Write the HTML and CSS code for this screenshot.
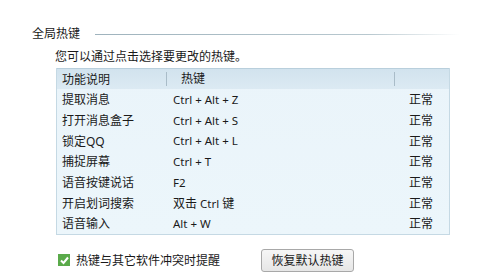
FILE: index.html
```html
<!DOCTYPE html>
<html lang="zh-CN">
  <head>
    <meta charset="UTF-8" />
    <title>全局热键</title>
    <link rel="stylesheet" href="styles.css">
  </head>
  <body>
    <div class="panel">
      <div class="group-title">
        <span>全局热键</span>
        <div class="rule"></div>
      </div>
      <p class="hint">您可以通过点击选择要更改的热键。</p>

      <div class="hotkeys">
        <div class="row head">
          <div class="cell">功能说明</div>
          <div class="cell">热键</div>
          <div class="cell"></div>
        </div>
        <div class="row"><div class="cell">提取消息</div><div class="cell key">Ctrl + Alt + Z</div><div class="cell state">正常</div></div>
        <div class="row"><div class="cell">打开消息盒子</div><div class="cell key">Ctrl + Alt + S</div><div class="cell state">正常</div></div>
        <div class="row"><div class="cell">锁定QQ</div><div class="cell key">Ctrl + Alt + L</div><div class="cell state">正常</div></div>
        <div class="row"><div class="cell">捕捉屏幕</div><div class="cell key">Ctrl + T</div><div class="cell state">正常</div></div>
        <div class="row"><div class="cell">语音按键说话</div><div class="cell key">F2</div><div class="cell state">正常</div></div>
        <div class="row"><div class="cell">开启划词搜索</div><div class="cell key"><span class="zh">双击</span> Ctrl <span class="zh">键</span></div><div class="cell state">正常</div></div>
        <div class="row"><div class="cell">语音输入</div><div class="cell key">Alt + W</div><div class="cell state">正常</div></div>
      </div>

      <div class="footer">
        <label class="check">
          <span class="box">
            <svg width="11" height="11" viewBox="0 0 11 11"><path d="M2 5.5 L4.5 8 L9 2.5" fill="none" stroke="#fff" stroke-width="2"/></svg>
          </span>
          热键与其它软件冲突时提醒
        </label>
        <button class="reset-btn">恢复默认热键</button>
      </div>
    </div>
  </body>
</html>
```

FILE: styles.css
```css
body {
  margin: 0;
  background: #fff;
  font-family: "Noto Sans", "Noto Sans CJK SC", sans-serif;
  font-size: 12px;
  color: #1a1a1a;
}

.panel {
  padding: 26px 0 0 32px;
}

.group-title {
  display: flex;
  align-items: center;
  height: 16px;
}

.group-title span {
  line-height: 16px;
}

.rule {
  flex: 0 0 365px;
  height: 1px;
  margin-left: 15px;
  background: linear-gradient(90deg, #9fb3bd 0%, #b8c8cf 75%, rgba(220, 230, 235, 0) 100%);
}

.hint {
  margin: 7px 0 0 23px;
  line-height: 16px;
}

.hotkeys {
  margin: 3px 0 0 24px;
  width: 392px;
  border: 1px solid #c5d9e4;
  border-top: none;
  background: linear-gradient(180deg, #eaf4fa 0%, #ecf6fb 100%);
}

.row {
  display: grid;
  grid-template-columns: 109px 228px 55px;
  height: 20.7px;
  align-items: center;
}

.row.head {
  height: 20px;
  background: linear-gradient(180deg, #d2e3ee 0%, #dceaf3 100%);
  border-top: 1px solid #b9cfdc;
}

.cell {
  padding-left: 5px;
  white-space: nowrap;
}

.head .cell + .cell {
  border-left: 1px solid #a9bcc8;
  padding-left: 14px;
  height: 14px;
  line-height: 14px;
}

.key {
  padding-left: 7px;
  font-size: 11.5px;
}

.key .zh {
  font-size: 12px;
}

.state {
  text-align: right;
  padding-right: 16px;
}

.footer {
  display: flex;
  align-items: center;
  margin: 14px 0 0 26px;
}

.check {
  display: flex;
  align-items: center;
  gap: 6px;
  width: 203px;
}

.box {
  width: 12px;
  height: 12px;
  background: #5aaa4a;
  display: flex;
  align-items: center;
  justify-content: center;
}

.reset-btn {
  width: 93px;
  height: 23px;
  font-family: inherit;
  font-size: 12px;
  color: #1a1a1a;
  background: linear-gradient(180deg, #f6f6f6 0%, #e6e6e6 100%);
  border: 1px solid #a8a8a8;
  border-radius: 3px;
  padding: 0;
}
```
